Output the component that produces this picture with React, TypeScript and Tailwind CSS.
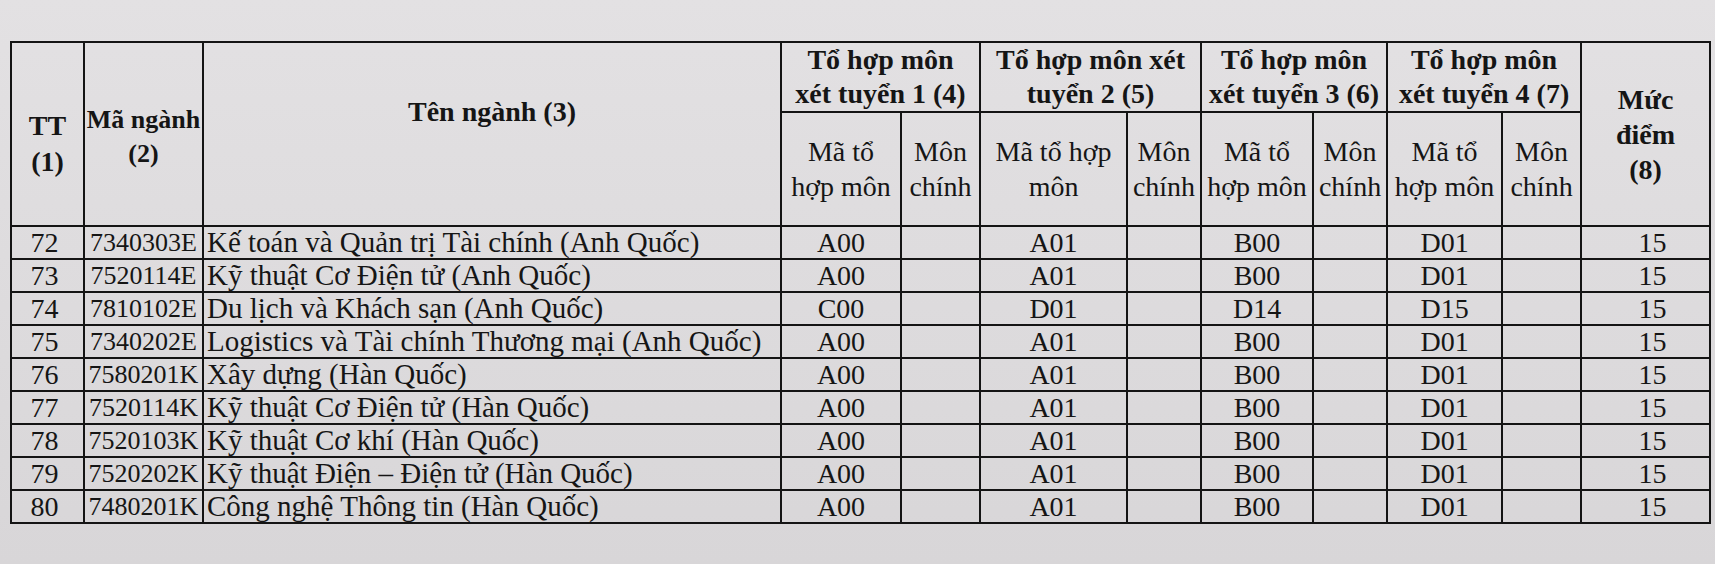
const rows = [
  { tt: "72", ma: "7340303E", ten: "Kế toán và Quản trị Tài chính (Anh Quốc)", t1: "A00", t2: "A01", t3: "B00", t4: "D01", diem: "15" },
  { tt: "73", ma: "7520114E", ten: "Kỹ thuật Cơ Điện tử (Anh Quốc)", t1: "A00", t2: "A01", t3: "B00", t4: "D01", diem: "15" },
  { tt: "74", ma: "7810102E", ten: "Du lịch và Khách sạn (Anh Quốc)", t1: "C00", t2: "D01", t3: "D14", t4: "D15", diem: "15" },
  { tt: "75", ma: "7340202E", ten: "Logistics và Tài chính Thương mại (Anh Quốc)", t1: "A00", t2: "A01", t3: "B00", t4: "D01", diem: "15" },
  { tt: "76", ma: "7580201K", ten: "Xây dựng (Hàn Quốc)", t1: "A00", t2: "A01", t3: "B00", t4: "D01", diem: "15" },
  { tt: "77", ma: "7520114K", ten: "Kỹ thuật Cơ Điện tử (Hàn Quốc)", t1: "A00", t2: "A01", t3: "B00", t4: "D01", diem: "15" },
  { tt: "78", ma: "7520103K", ten: "Kỹ thuật Cơ khí (Hàn Quốc)", t1: "A00", t2: "A01", t3: "B00", t4: "D01", diem: "15" },
  { tt: "79", ma: "7520202K", ten: "Kỹ thuật Điện – Điện tử (Hàn Quốc)", t1: "A00", t2: "A01", t3: "B00", t4: "D01", diem: "15" },
  { tt: "80", ma: "7480201K", ten: "Công nghệ Thông tin (Hàn Quốc)", t1: "A00", t2: "A01", t3: "B00", t4: "D01", diem: "15" },
];

const cell = "border-2 border-[#141414] p-0";

function GroupHead({ children }: { children: React.ReactNode }) {
  return (
    <th colSpan={2} className={`${cell} font-bold text-center align-middle leading-[34px]`}>
      {children}
    </th>
  );
}

function SubHead({ children }: { children: React.ReactNode }) {
  return <th className={`${cell} font-normal text-center align-middle leading-[35px]`}>{children}</th>;
}

export default function App() {
  return (
    <div className="w-[1715px] h-[564px] overflow-hidden bg-linear-to-b from-[#e3e1e3] to-[#d8d6d8] pt-[41px] pl-[10px] [font-family:'Liberation_Serif',serif] text-[28px] text-[#151515]">
      <table className="table-fixed border-collapse w-[1700px]">
        <colgroup>
          <col className="w-[73px]" />
          <col className="w-[119px]" />
          <col className="w-[578px]" />
          <col className="w-[120px]" />
          <col className="w-[79px]" />
          <col className="w-[147px]" />
          <col className="w-[74px]" />
          <col className="w-[112px]" />
          <col className="w-[74px]" />
          <col className="w-[115px]" />
          <col className="w-[79px]" />
          <col className="w-[129px]" />
        </colgroup>
        <thead>
          <tr className="h-[66px]">
            <th rowSpan={2} className={`${cell} font-bold text-center align-middle leading-[36px] pt-[20px]`}>
              TT
              <br />
              (1)
            </th>
            <th rowSpan={2} className={`${cell} font-bold text-center align-middle leading-[34px] text-[26px] pt-[6px]`}>
              Mã ngành
              <br />
              (2)
            </th>
            <th rowSpan={2} className={`${cell} font-bold text-center align-middle pb-[44px]`}>
              Tên ngành (3)
            </th>
            <GroupHead>
              Tổ hợp môn
              <br />
              xét tuyển 1 (4)
            </GroupHead>
            <GroupHead>
              Tổ hợp môn xét
              <br />
              tuyển 2 (5)
            </GroupHead>
            <GroupHead>
              Tổ hợp môn
              <br />
              xét tuyển 3 (6)
            </GroupHead>
            <GroupHead>
              Tổ hợp môn
              <br />
              xét tuyển 4 (7)
            </GroupHead>
            <th rowSpan={2} className={`${cell} font-bold text-center align-middle leading-[35px]`}>
              Mức
              <br />
              điểm
              <br />
              (8)
            </th>
          </tr>
          <tr className="h-[114px]">
            <SubHead>
              Mã tổ
              <br />
              hợp môn
            </SubHead>
            <SubHead>
              Môn
              <br />
              chính
            </SubHead>
            <SubHead>
              Mã tổ hợp
              <br />
              môn
            </SubHead>
            <SubHead>
              Môn
              <br />
              chính
            </SubHead>
            <SubHead>
              Mã tổ
              <br />
              hợp môn
            </SubHead>
            <SubHead>
              Môn
              <br />
              chính
            </SubHead>
            <SubHead>
              Mã tổ
              <br />
              hợp môn
            </SubHead>
            <SubHead>
              Môn
              <br />
              chính
            </SubHead>
          </tr>
        </thead>
        <tbody>
          {rows.map((r) => (
            <tr key={r.tt} className="h-[33px] leading-[31px]">
              <td className={`${cell} text-center pr-[6px]`}>{r.tt}</td>
              <td className={`${cell} text-center whitespace-nowrap text-[26px]`}>{r.ma}</td>
              <td className={`${cell} pl-[3px] whitespace-nowrap text-[29px]`}>{r.ten}</td>
              <td className={`${cell} text-center`}>{r.t1}</td>
              <td className={cell}></td>
              <td className={`${cell} text-center`}>{r.t2}</td>
              <td className={cell}></td>
              <td className={`${cell} text-center`}>{r.t3}</td>
              <td className={cell}></td>
              <td className={`${cell} text-center`}>{r.t4}</td>
              <td className={cell}></td>
              <td className={`${cell} text-center pl-[14px]`}>{r.diem}</td>
            </tr>
          ))}
        </tbody>
      </table>
    </div>
  );
}
